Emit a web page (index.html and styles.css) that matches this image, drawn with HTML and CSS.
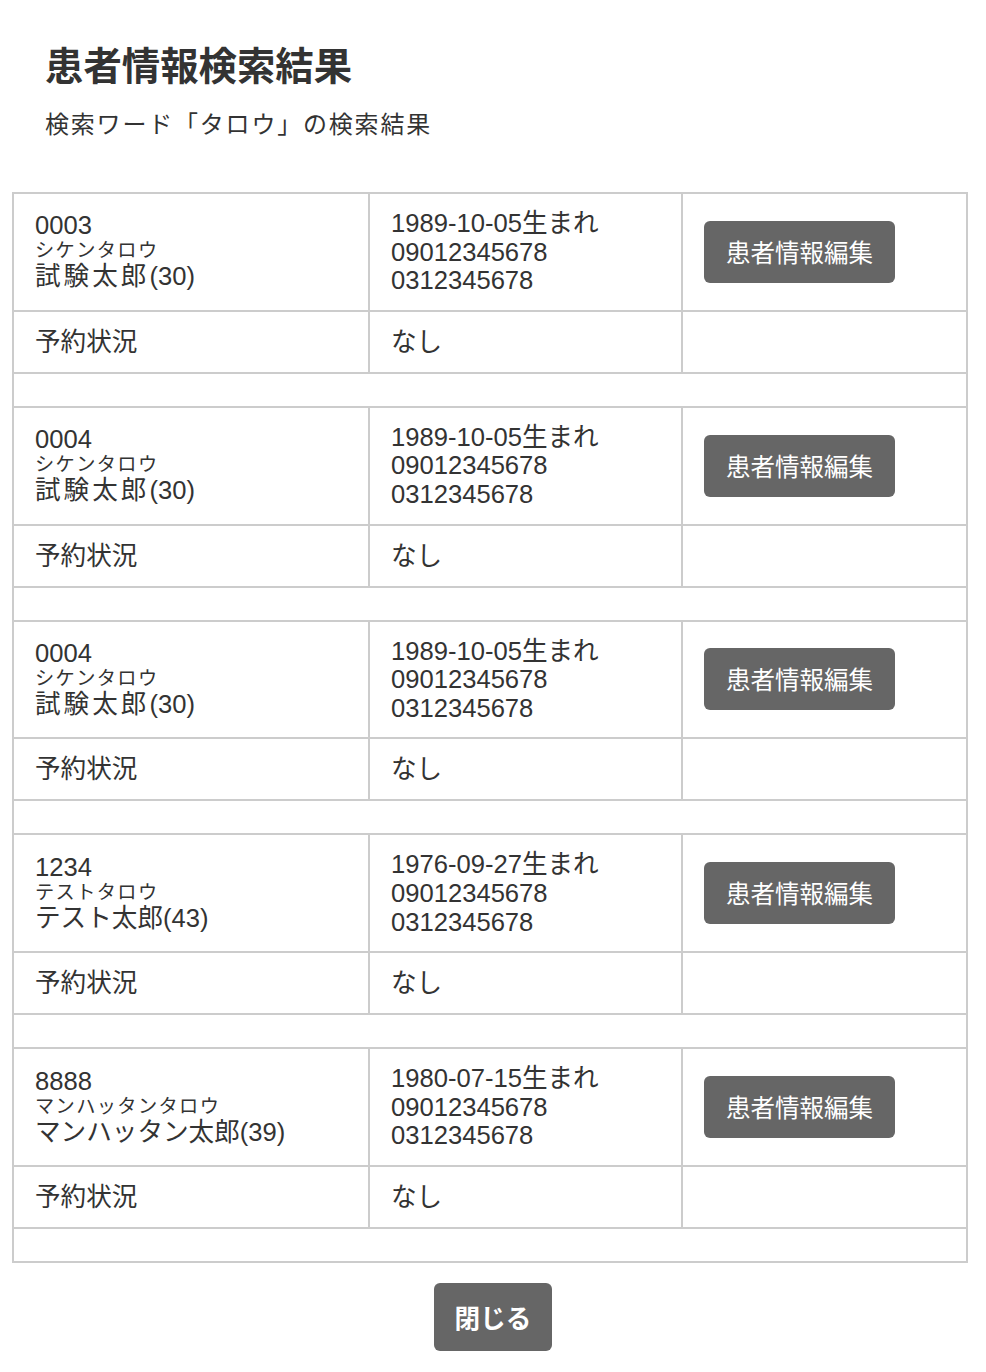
FILE: index.html
```html
<!DOCTYPE html>
<html lang="ja">
<head>
<meta charset="utf-8">
<title>患者情報検索結果</title>
<link rel="stylesheet" href="styles.css">
</head>
<body>
<main class="page">
  <header class="head">
    <h1 class="title">患者情報検索結果</h1>
    <p class="sub">検索ワード「タロウ」の検索結果</p>
  </header>
  <table class="results">
    <colgroup><col class="c1"><col class="c2"><col class="c3"></colgroup>
    <tbody>
      <tr class="main-row">
        <td class="cell"><div class="pid">0003</div><div class="kana">シケンタロウ</div><div class="name"><span class="wide">試験太郎</span>(30)</div></td>
        <td class="cell info">1989-10-05生まれ<br>09012345678<br>0312345678</td>
        <td class="cell"><button class="edit" type="button">患者情報編集</button></td>
      </tr>
      <tr class="status-row"><td class="cell">予約状況</td><td class="cell">なし</td><td class="cell"></td></tr>
      <tr class="gap-row"><td class="gap" colspan="3"></td></tr>

      <tr class="main-row">
        <td class="cell"><div class="pid">0004</div><div class="kana">シケンタロウ</div><div class="name"><span class="wide">試験太郎</span>(30)</div></td>
        <td class="cell info">1989-10-05生まれ<br>09012345678<br>0312345678</td>
        <td class="cell"><button class="edit" type="button">患者情報編集</button></td>
      </tr>
      <tr class="status-row"><td class="cell">予約状況</td><td class="cell">なし</td><td class="cell"></td></tr>
      <tr class="gap-row"><td class="gap" colspan="3"></td></tr>

      <tr class="main-row">
        <td class="cell"><div class="pid">0004</div><div class="kana">シケンタロウ</div><div class="name"><span class="wide">試験太郎</span>(30)</div></td>
        <td class="cell info">1989-10-05生まれ<br>09012345678<br>0312345678</td>
        <td class="cell"><button class="edit" type="button">患者情報編集</button></td>
      </tr>
      <tr class="status-row"><td class="cell">予約状況</td><td class="cell">なし</td><td class="cell"></td></tr>
      <tr class="gap-row"><td class="gap" colspan="3"></td></tr>

      <tr class="main-row">
        <td class="cell"><div class="pid">1234</div><div class="kana">テストタロウ</div><div class="name">テスト太郎(43)</div></td>
        <td class="cell info">1976-09-27生まれ<br>09012345678<br>0312345678</td>
        <td class="cell"><button class="edit" type="button">患者情報編集</button></td>
      </tr>
      <tr class="status-row"><td class="cell">予約状況</td><td class="cell">なし</td><td class="cell"></td></tr>
      <tr class="gap-row"><td class="gap" colspan="3"></td></tr>

      <tr class="main-row">
        <td class="cell"><div class="pid">8888</div><div class="kana">マンハッタンタロウ</div><div class="name">マンハッタン太郎(39)</div></td>
        <td class="cell info">1980-07-15生まれ<br>09012345678<br>0312345678</td>
        <td class="cell"><button class="edit" type="button">患者情報編集</button></td>
      </tr>
      <tr class="status-row"><td class="cell">予約状況</td><td class="cell">なし</td><td class="cell"></td></tr>
      <tr class="gap-row"><td class="gap" colspan="3"></td></tr>
    </tbody>
  </table>
  <button class="close" type="button">閉じる</button>
</main>
</body>
</html>
```

FILE: styles.css
```css
html, body {
  margin: 0;
  padding: 0;
  background: #ffffff;
}
body {
  font-family: "Liberation Sans", "Noto Sans CJK JP", sans-serif;
  color: #333333;
  font-kerning: none;
}
.page {
  padding: 40px 0 20px 0;
}
.head {
  padding-left: 45px;
}
.title {
  margin: 0;
  font-size: 38.4px;
  line-height: 46px;
  font-weight: 700;
  font-family: "Noto Sans CJK JP", sans-serif;
  color: #333333;
}
.sub {
  margin: 22px 0 0 0;
  font-size: 24px;
  line-height: 30px;
  letter-spacing: 1.8px;
  font-family: "Noto Sans CJK JP", sans-serif;
}
.results {
  margin: 54px 0 0 12px;
  width: 954px;
  border-collapse: collapse;
  table-layout: fixed;
  border: 2px solid #cccccc;
}
.c1 { width: 356px; }
.c2 { width: 313px; }
.c3 { width: 285px; }
.cell {
  border: 2px solid #cccccc;
  padding: 15px 21px;
  vertical-align: middle;
  font-size: 25.6px;
  line-height: 30px;
}
.info {
  line-height: 28.6px;
}
.pid {
  font-size: 25.6px;
  line-height: 25px;
}
.kana {
  font-size: 19.2px;
  line-height: 25px;
  letter-spacing: 1.4px;
}
.name {
  font-size: 25.6px;
  line-height: 27px;
}
.wide {
  letter-spacing: 3px;
}
.gap {
  border: 2px solid #cccccc;
  padding: 0;
  height: 32px;
}
.edit {
  display: block;
  height: 62px;
  padding: 0 22px;
  border: none;
  border-radius: 6px;
  background: #666666;
  color: #ffffff;
  font-family: "Noto Sans CJK JP", sans-serif;
  font-size: 24.5px;
  line-height: 62px;
}
.close {
  display: block;
  margin: 20px auto 0 auto;
  width: 118px;
  height: 68px;
  padding: 0;
  border: none;
  border-radius: 6px;
  background: #666666;
  color: #ffffff;
  font-family: "Noto Sans CJK JP", sans-serif;
  font-weight: 700;
  font-size: 25.6px;
  line-height: 68px;
}
```
